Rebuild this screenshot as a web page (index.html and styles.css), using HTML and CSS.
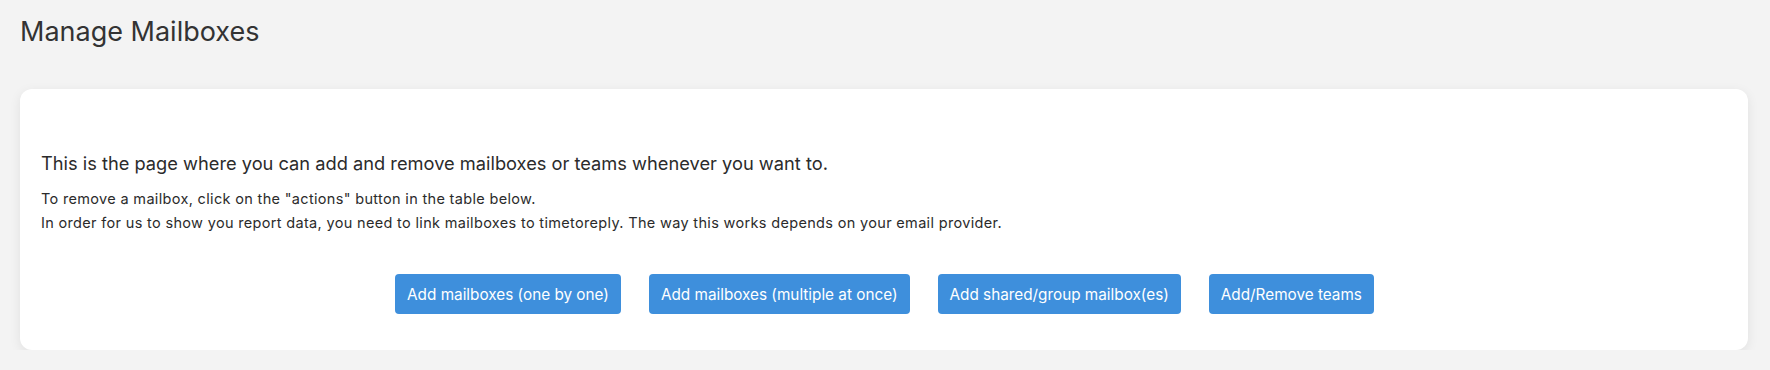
FILE: index.html
```html
<!DOCTYPE html>
<html>
<head>
<meta charset="utf-8">
<title>Manage Mailboxes</title>
<link rel="stylesheet" href="styles.css">
</head>
<body>
<h1 class="page-title">Manage Mailboxes</h1>

<div class="card">
  <p class="lead">This is the page where you can add and remove mailboxes or teams whenever you want to.</p>
  <p class="help">
    To remove a mailbox, click on the "actions" button in the table below.<br>
    In order for us to show you report data, you need to link mailboxes to timetoreply. The way this works depends on your email provider.
  </p>

  <div class="actions">
    <button class="btn">Add mailboxes (one by one)</button>
    <button class="btn">Add mailboxes (multiple at once)</button>
    <button class="btn">Add shared/group mailbox(es)</button>
    <button class="btn">Add/Remove teams</button>
  </div>
</div>
</body>
</html>
```

FILE: styles.css
```css
body, button { font-family: Inter, "Liberation Sans", sans-serif; }
body { margin: 0; padding: 16px 22px 0 20px; background: #f3f3f3; color: #333; }

.page-title { margin: 0 0 41px; font-size: 27px; font-weight: 400; line-height: 32px; color: #333; }

.card {
  background: #fff;
  border-radius: 12px;
  box-shadow: 0 3px 12px rgba(0, 0, 0, 0.08);
  padding: 61px 20px 36px 21px;
}

.lead { margin: 0; font-size: 18.25px; line-height: 26px; color: #2b2b2b; }
.help { margin: 11px 0 0; font-size: 14.5px; letter-spacing: 0.33px; line-height: 23.5px; color: #2b2b2b; }

.actions { display: flex; justify-content: center; gap: 28px; margin-top: 40px; }

.btn {
  height: 40px;
  padding: 0 12px;
  border: 0;
  border-radius: 4px;
  background: #3e8fdc;
  color: #fff;
  font-size: 15.3px;
  cursor: pointer;
}
.btn:hover { background: #3580c8; }
```
